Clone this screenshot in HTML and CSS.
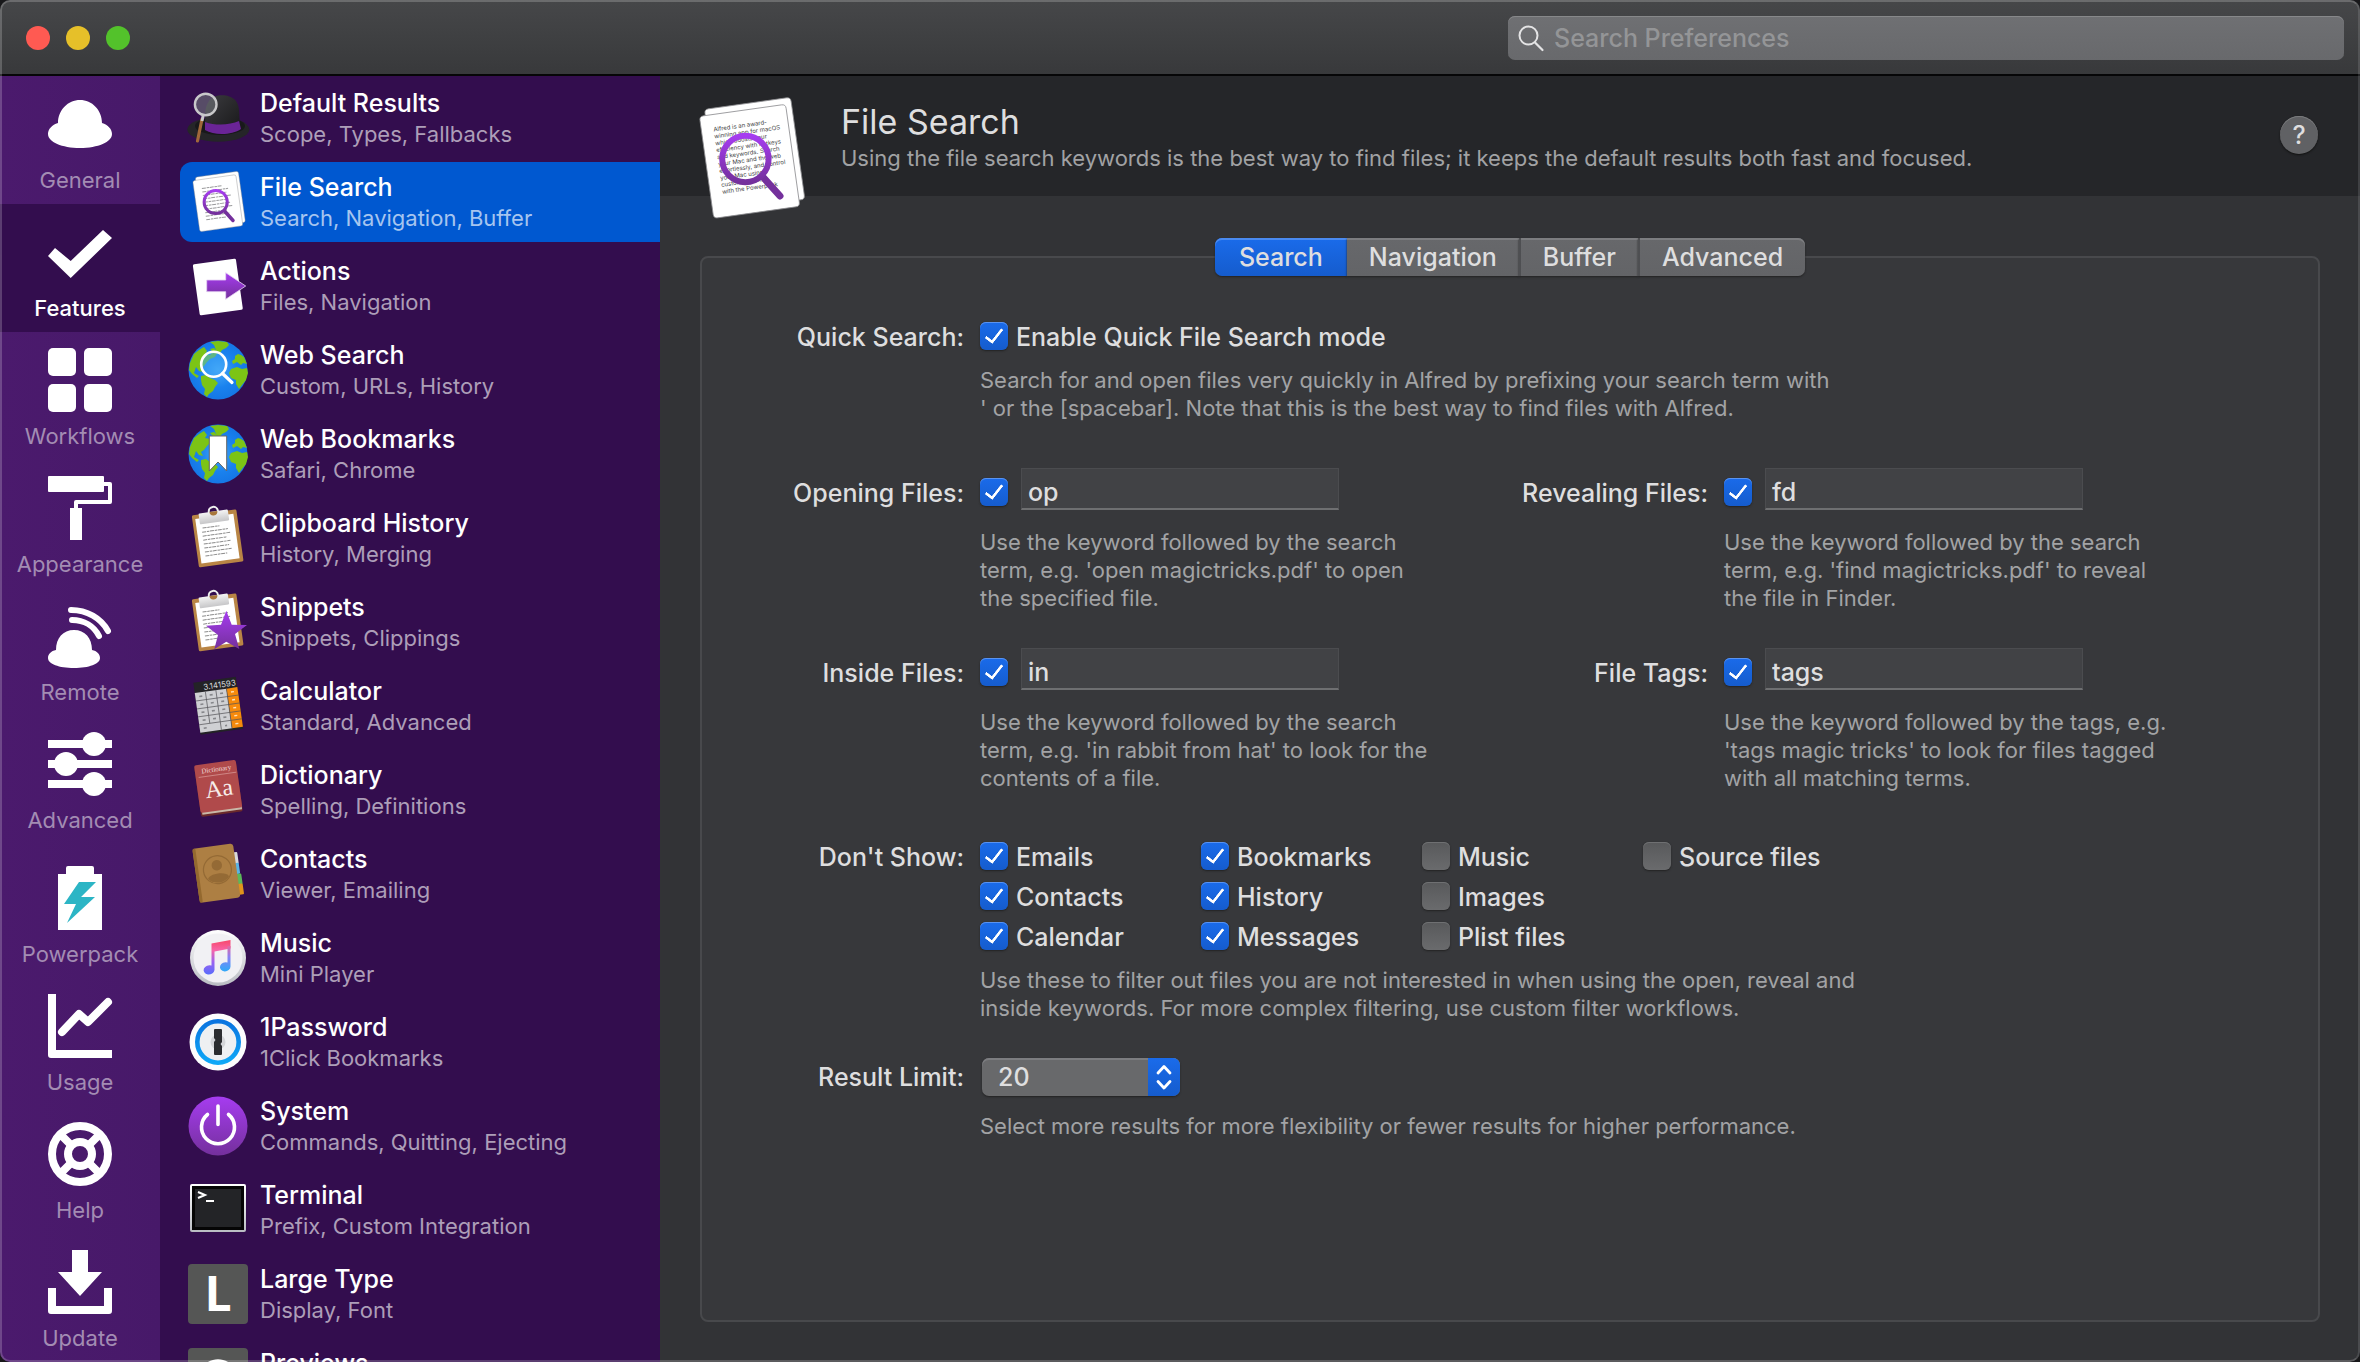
FILE: index.html
```html
<!DOCTYPE html>
<html lang="en">
<head>
<meta charset="utf-8">
<meta name="viewport" content="width=device-width, initial-scale=1">
<title>Alfred Preferences</title>
<link rel="stylesheet" href="styles.css">
</head>
<body>
<svg class="defs" aria-hidden="true">
  <defs>
    <linearGradient id="violet" x1="0" y1="0" x2="0" y2="1"><stop offset="0" stop-color="#a63cf0"/><stop offset="1" stop-color="#74309c"/></linearGradient>
    <linearGradient id="dome" x1="0" y1="0" x2="1" y2="1"><stop offset="0" stop-color="#3c3c3f"/><stop offset="1" stop-color="#161618"/></linearGradient>
    <linearGradient id="silver" x1="0" y1="0" x2="0" y2="1"><stop offset="0" stop-color="#fff"/><stop offset="1" stop-color="#b9bcc2"/></linearGradient>
    <linearGradient id="clip" x1="0" y1="0" x2="0" y2="1"><stop offset="0" stop-color="#f4f4f4"/><stop offset="1" stop-color="#c6c6c8"/></linearGradient>
    <linearGradient id="note" gradientUnits="userSpaceOnUse" x1="0" y1="12" x2="0" y2="46"><stop offset="0" stop-color="#f8486a"/><stop offset=".3" stop-color="#f765a8"/><stop offset=".65" stop-color="#9a62f0"/><stop offset="1" stop-color="#5b6cfb"/></linearGradient>
    <linearGradient id="note2" gradientUnits="userSpaceOnUse" x1="0" y1="16" x2="0" y2="42"><stop offset="0" stop-color="#f5648f"/><stop offset=".5" stop-color="#8a80f5"/><stop offset="1" stop-color="#35a6f8"/></linearGradient>
    <linearGradient id="onering" x1="0" y1="0" x2="0" y2="1"><stop offset="0" stop-color="#0a74e0"/><stop offset="1" stop-color="#0fa8f7"/></linearGradient>
    <radialGradient id="sea"><stop offset="0" stop-color="#45a9f8"/><stop offset=".6" stop-color="#1a82ee"/><stop offset="1" stop-color="#1577e6"/></radialGradient>
    <symbol id="globe" viewBox="0 0 60 60">
      <circle cx="30" cy="30" r="29.500" fill="url(#sea)"/>
      <g fill="#7cc415">
        <path d="M1 30 2 23 6 14 11 10 16 7 19 11 17 14 22 15 25 12 22 9 26 8 30 12 27 17 22 19 19 22 16 26 13 28 15 32 11 31 8 27 6 33 11 36 9 38 4 34Z"/>
        <path d="M22 2 30 1 39 2 41 5 38 8 34 10 31 14 28 10 26 5Z"/>
        <path d="M13 36 18 35 22 38 27 40 30 43 27 47 25 51 21 54 19 57 16 54 17 49 14 45 13 40Z"/>
        <path d="M41 33 43 29 49 27 54 29 59 28 60 33 58 40 54 45 51 49 48 44 48 40 43 38Z"/>
        <path d="M44 21 47 19 47 16 50 14 53 15 56 17 59 24 55 23 53 25 49 22 45 24Z"/>
      </g>
    </symbol>
    <symbol id="clipboard" viewBox="0 0 60 60" overflow="visible">
      <g transform="translate(3.700 7.500) rotate(-8)">
        <rect width="45" height="52.500" rx="1.500" fill="#b98545"/>
        <rect x="3" y="4" width="38.500" height="45" fill="#fff"/>
        <path d="M9 14h17M8 18h26M8 22h28M8 26h24M8 30h27M8 34h25M8 38h27M8 42h22" stroke="#8c8c8c" stroke-width="1" stroke-dasharray="4 .8 2.500 .6"/>
        <circle cx="22" cy="-1" r="4.600" fill="none" stroke="#eee" stroke-width="2"/>
        <rect x="7" y="-1" width="29.500" height="11" rx="1" fill="url(#clip)"/>
        <path d="M18 -1a4 4 0 0 0 8 0z" fill="#a8773c"/>
      </g>
    </symbol>
    <symbol id="pages" viewBox="0 0 60 60" overflow="visible">
      <g stroke="#8d8d90" stroke-width=".4" fill="#fff">
        <rect width="43.500" height="51.500" rx="2" transform="translate(7.200 5.200) rotate(-8)"/>
        <rect width="43.500" height="51.500" rx="2" transform="translate(4.700 8.700) rotate(-8)"/>
      </g>
    </symbol>
    <symbol id="lens" viewBox="0 0 60 60">
      <path d="M36.500 39 45 48.500" stroke="#74309c" stroke-width="3.500" stroke-linecap="round"/>
      <circle cx="27.700" cy="30" r="11.600" fill="none" stroke="url(#violet)" stroke-width="3"/>
    </symbol>
  </defs>
</svg>

<div class="window">
  <header class="titlebar">
    <div class="lights">
      <button class="light light--close" aria-label="Close"></button>
      <button class="light light--min" aria-label="Minimise"></button>
      <button class="light light--zoom" aria-label="Zoom"></button>
    </div>
    <label class="search">
      <svg class="search__icon" viewBox="0 0 26 26" aria-hidden="true"><circle cx="10.500" cy="10.500" r="9" fill="none" stroke="#e4e4e5" stroke-width="2"/><path d="M17 17.500 24.500 25" stroke="#e4e4e5" stroke-width="2.200" stroke-linecap="round"/></svg>
      <input class="search__input" type="search" placeholder="Search Preferences" aria-label="Search Preferences">
    </label>
  </header>

  <div class="body">
    <nav class="rail" aria-label="Sections">
      <a class="rail__item" href="#general"><svg viewBox="0 0 64 64" aria-hidden="true"><path fill="#fff" d="M10 31C10 18 20 8 32 8S54 18 54 31C60 33 64 37 64 42 64 50 50 56 32 56S0 50 0 42C0 37 4 33 10 31Z"/></svg>General</a>
      <a class="rail__item rail__item--on" href="#features" aria-current="page"><svg viewBox="0 0 64 64" aria-hidden="true"><path fill="#fff" d="M7 28 22.700 41 55 10 64 18 22.700 58 0 36Z"/></svg>Features</a>
      <a class="rail__item" href="#workflows"><svg viewBox="0 0 64 64" aria-hidden="true"><g fill="#fff"><rect width="28" height="28" rx="5"/><rect x="36" width="28" height="28" rx="5"/><rect y="36" width="28" height="28" rx="5"/><rect x="36" y="36" width="28" height="28" rx="5"/></g></svg>Workflows</a>
      <a class="rail__item" href="#appearance"><svg viewBox="0 0 64 64" aria-hidden="true"><rect width="56" height="16" rx="1" fill="#fff"/><path d="M56 8H62V26H28V33" fill="none" stroke="#fff" stroke-width="4" stroke-linejoin="round"/><rect x="22" y="32" width="12" height="32" fill="#fff"/></svg>Appearance</a>
      <a class="rail__item" href="#remote"><svg viewBox="0 0 64 64" aria-hidden="true"><path fill="#fff" d="M8 46C8 34 15 26 26 26S44 34 44 46C49 47 52 50 52 54 52 60 41 64 26 64S0 60 0 54C0 50 3 47 8 46Z"/><g fill="none" stroke="#fff" stroke-width="6" stroke-linecap="round"><path d="M23 6C39 6 53 14 60 27"/><path d="M24 16C36 16 46 22 51 32"/></g></svg>Remote</a>
      <a class="rail__item" href="#advanced"><svg viewBox="0 0 64 64" aria-hidden="true"><path d="M0 12H64M0 32H64M0 52H64" stroke="#fff" stroke-width="8"/><g fill="#fff"><circle cx="46" cy="12" r="12"/><circle cx="18" cy="32" r="12"/><circle cx="46" cy="52" r="12"/></g></svg>Advanced</a>
      <a class="rail__item rail__item--apart" href="#powerpack"><svg viewBox="0 0 64 64" aria-hidden="true"><path fill="#fff" d="M18 2a2 2 0 0 1 2-2H44a2 2 0 0 1 2 2V8H54V64H10V8H18Z"/><path fill="#2cb5c5" d="M31 16H48L33 31H47L19 57 28 38H16Z"/></svg>Powerpack</a>
      <a class="rail__item" href="#usage"><svg viewBox="0 0 64 64" aria-hidden="true"><path fill="#fff" d="M0 0H8V56H64V64H3A3 3 0 0 1 0 61Z"/><path d="M14 38 31 20 40 28 60 8" fill="none" stroke="#fff" stroke-width="8" stroke-linecap="round" stroke-linejoin="round"/></svg>Usage</a>
      <a class="rail__item" href="#help"><svg viewBox="0 0 64 64" aria-hidden="true"><g fill="none" stroke="#fff" stroke-width="8"><circle cx="32" cy="32" r="28"/><circle cx="32" cy="32" r="12"/><path d="M12 12 24 24M52 12 40 24M12 52 24 40M52 52 40 40"/></g></svg>Help</a>
      <a class="rail__item" href="#update"><svg viewBox="0 0 64 64" aria-hidden="true"><path fill="#fff" d="M24 0H40V22H54L32 46 10 22H24ZM0 38H8V56H56V38H64V61A3 3 0 0 1 61 64H3A3 3 0 0 1 0 61Z"/></svg>Update</a>
    </nav>

    <nav class="list" aria-label="Features">
      <a class="item" href="#default-results">
        <svg class="item__icon" viewBox="0 0 60 60" aria-hidden="true">
          <ellipse cx="30.300" cy="41.500" rx="31" ry="12.300" fill="#252528"/>
          <ellipse cx="32" cy="38" rx="25" ry="9" fill="#18181a"/>
          <path d="M17 41C18 30 15 22 21 13 27 5 42 6 48 13 53 20 50 28 53 41 45 47 27 48 17 41Z" fill="url(#dome)"/>
          <path d="M17 34C28 38 42 37 51 33L53 41C44 47 27 48 17 42Z" fill="#6a2496"/>
          <path d="M14 31 9.500 53" stroke="#a0683a" stroke-width="3.200" stroke-linecap="round"/>
          <path d="M15.500 26 14 33" stroke="#c9c9cc" stroke-width="3"/>
          <circle cx="17.700" cy="16.500" r="10.800" fill="#6c6f74" fill-opacity=".65" stroke="#c8c8ca" stroke-width="2.400"/>
        </svg>
        <span class="item__text"><span class="item__name">Default Results</span><span class="item__sub">Scope, Types, Fallbacks</span></span>
      </a>
      <a class="item item--on" href="#file-search" aria-current="page">
        <svg class="item__icon" viewBox="0 0 60 60" aria-hidden="true">
          <use href="#pages"/>
          <path transform="translate(4.700 8.700) rotate(-8)" d="M8 9h20M8 12.500h26M8 16h24M8 19.500h28M8 23h24M8 26.500h26M8 30h28M8 33.500h22M8 37h24M8 40.500h20" stroke="#9a9a9c" stroke-width="1" stroke-dasharray="4 .8 2.500 .6"/>
          <use href="#lens"/>
        </svg>
        <span class="item__text"><span class="item__name">File Search</span><span class="item__sub">Search, Navigation, Buffer</span></span>
      </a>
      <a class="item" href="#actions">
        <svg class="item__icon" viewBox="0 0 60 60" aria-hidden="true"><rect width="43.500" height="51.500" rx="1.500" transform="translate(4.700 8.500) rotate(-8)" fill="#fff"/><path d="M18.700 24H37.700V16.700L57.700 30 37.700 43.300V35.700H18.700Z" fill="url(#violet)" stroke="#e6d3f3" stroke-width=".8"/></svg>
        <span class="item__text"><span class="item__name">Actions</span><span class="item__sub">Files, Navigation</span></span>
      </a>
      <a class="item" href="#web-search">
        <svg class="item__icon" viewBox="0 0 60 60" aria-hidden="true"><use href="#globe"/><circle cx="25.700" cy="24.300" r="12.500" fill="#3fa6f8" fill-opacity=".5"/><circle cx="25.700" cy="24.300" r="12.500" fill="none" stroke="#fff" stroke-width="2.600"/><path d="M34.500 33.500 44 42.500" stroke="#fff" stroke-width="3.200" stroke-linecap="round"/></svg>
        <span class="item__text"><span class="item__name">Web Search</span><span class="item__sub">Custom, URLs, History</span></span>
      </a>
      <a class="item" href="#web-bookmarks">
        <svg class="item__icon" viewBox="0 0 60 60" aria-hidden="true"><use href="#globe"/><path d="M21.300 12H38.700V47L30 38 21.300 47Z" fill="#fff" stroke="#666" stroke-width="1"/></svg>
        <span class="item__text"><span class="item__name">Web Bookmarks</span><span class="item__sub">Safari, Chrome</span></span>
      </a>
      <a class="item" href="#clipboard-history">
        <svg class="item__icon" viewBox="0 0 60 60" aria-hidden="true"><use href="#clipboard"/></svg>
        <span class="item__text"><span class="item__name">Clipboard History</span><span class="item__sub">History, Merging</span></span>
      </a>
      <a class="item" href="#snippets">
        <svg class="item__icon" viewBox="0 0 60 60" aria-hidden="true"><use href="#clipboard"/><path d="M38.300 18.700 43.700 32.700 59 33 47 42 51.300 57 38.300 49.700 26.300 57.300 30 43 18 33.700 33 32.700Z" fill="url(#violet)"/></svg>
        <span class="item__text"><span class="item__name">Snippets</span><span class="item__sub">Snippets, Clippings</span></span>
      </a>
      <a class="item" href="#calculator">
        <svg class="item__icon" viewBox="0 0 60 60" aria-hidden="true">
          <g transform="translate(5.300 6.700) rotate(-8)">
            <rect width="43" height="52.500" fill="#232326"/>
            <rect y="10.500" width="32" height="40" fill="#cfd0d3"/>
            <rect x="32" y="10.500" width="11" height="40" fill="#f68a0c"/>
            <path d="M0 18.500H43M0 26.500H43M0 34.500H43M0 42.500H43M10.700 10.500V42.500M21.300 10.500V50.500M32 10.500V50.500" stroke="#55565a" stroke-width=".7"/>
            <path d="M4 14.500h3M14.500 14.500h3M25 14.500h3M4 22.500h3M14.500 22.500h3M25 22.500h3M4 30.500h3M14.500 30.500h3M25 30.500h3M4 38.500h3M14.500 38.500h3M25 38.500h3M4 46.500h3M25.500 47h2" stroke="#85868a" stroke-width="1.600"/>
            <path d="M36 14.500h3M36 22.500h3M36 30.500h3M36 38.500h3M36 46.500h3" stroke="#ffe2b8" stroke-width="1.400"/>
            <text x="42" y="8.600" text-anchor="end" font-family="Inter, sans-serif" font-size="8" font-weight="400" fill="#d8dadc">3.141593</text>
          </g>
        </svg>
        <span class="item__text"><span class="item__name">Calculator</span><span class="item__sub">Standard, Advanced</span></span>
      </a>
      <a class="item" href="#dictionary">
        <svg class="item__icon" viewBox="0 0 60 60" aria-hidden="true">
          <g transform="translate(6 5.500) rotate(-8)" font-weight="400">
            <rect y="2" width="42" height="50" rx="2" fill="#6b2a2b"/>
            <rect x="1.500" y="46" width="40" height="4" fill="#c9b8a8"/>
            <rect width="42" height="48" rx="2" fill="#b04a4b"/>
            <path d="M3 12.500H41" stroke="#d99a98" stroke-width=".7"/>
            <text x="21.500" y="9" text-anchor="middle" font-family="Liberation Serif, serif" font-size="7" fill="#f2dcda">Dictionary</text>
            <text x="21.500" y="34" text-anchor="middle" font-family="Liberation Serif, serif" font-size="24" fill="#f7ecea">Aa</text>
          </g>
        </svg>
        <span class="item__text"><span class="item__name">Dictionary</span><span class="item__sub">Spelling, Definitions</span></span>
      </a>
      <a class="item" href="#contacts">
        <svg class="item__icon" viewBox="0 0 60 60" aria-hidden="true">
          <g transform="translate(4.300 5) rotate(-8)">
            <rect x="38" y="9" width="6" height="12" rx="1" fill="#d9d9dc"/><rect x="38" y="20" width="6" height="11" rx="1" fill="#5bb4e4"/><rect x="38" y="31" width="7" height="11" rx="1" fill="#5cb85a"/><rect x="38" y="41" width="7" height="11" rx="1" fill="#e0931c"/>
            <rect width="41" height="54.500" rx="3" fill="#ad7f43"/>
            <rect width="3" height="54.500" rx="1.500" fill="#94692f"/>
            <g fill="#946a35"><circle cx="22" cy="19.500" r="5.200"/><path d="M11.500 32C13 26.500 31 26.500 32.500 32 28 38.500 16 38.500 11.500 32Z"/></g>
            <circle cx="22" cy="24" r="14" fill="none" stroke="#946a35" stroke-width="1.200"/>
          </g>
        </svg>
        <span class="item__text"><span class="item__name">Contacts</span><span class="item__sub">Viewer, Emailing</span></span>
      </a>
      <a class="item" href="#music">
        <svg class="item__icon" viewBox="0 0 60 60" aria-hidden="true"><circle cx="30" cy="30" r="28" fill="url(#silver)"/><circle cx="30" cy="30" r="24.500" fill="#f1f1f4"/>
          <path d="M23.500 15.500 42.500 12V20.500L26.500 23.500V42A5.500 4.600 -12 1 1 23.500 37.500Z" fill="url(#note)"/>
          <path d="M39.500 18H42.500V38.500A5.300 4.600 -12 1 1 39.500 34.500Z" fill="url(#note2)"/>
        </svg>
        <span class="item__text"><span class="item__name">Music</span><span class="item__sub">Mini Player</span></span>
      </a>
      <a class="item" href="#onepassword">
        <svg class="item__icon" viewBox="0 0 60 60" aria-hidden="true"><circle cx="30" cy="30" r="28.500" fill="#fdfdfd"/><circle cx="30" cy="30" r="20.700" fill="#eef0f2" stroke="url(#onering)" stroke-width="4.600"/><circle cx="30" cy="30" r="7.500" fill="#d4d6d9"/><path d="M27 17H33A1 1 0 0 1 34 18V30L32.500 32 34 34V42A1 1 0 0 1 33 43H27A1 1 0 0 1 26 42V30L27.500 28 26 26V18A1 1 0 0 1 27 17Z" fill="#2b2d30"/></svg>
        <span class="item__text"><span class="item__name">1Password</span><span class="item__sub">1Click Bookmarks</span></span>
      </a>
      <a class="item" href="#system">
        <svg class="item__icon" viewBox="0 0 60 60" aria-hidden="true"><circle cx="30" cy="30" r="29.500" fill="url(#violet)"/><path d="M30 10V28.500M19.500 18.500A16.500 16.500 0 1 0 40.500 18.500" fill="none" stroke="#fff" stroke-width="3.600" stroke-linecap="round"/></svg>
        <span class="item__text"><span class="item__name">System</span><span class="item__sub">Commands, Quitting, Ejecting</span></span>
      </a>
      <a class="item" href="#terminal">
        <svg class="item__icon" viewBox="0 0 60 60" aria-hidden="true"><rect x="2" y="4" width="56" height="48" rx="2" fill="url(#silver)"/><rect x="4" y="6" width="52" height="44" fill="#050505"/><rect x="7" y="9" width="46" height="38" fill="#232427"/><path d="M10 12 17 15 10 18M18 21H26" fill="none" stroke="#fff" stroke-width="2"/></svg>
        <span class="item__text"><span class="item__name">Terminal</span><span class="item__sub">Prefix, Custom Integration</span></span>
      </a>
      <a class="item" href="#large-type">
        <svg class="item__icon" viewBox="0 0 60 60" aria-hidden="true"><rect width="60" height="60" rx="4" fill="#555655"/><text x="30" y="47" text-anchor="middle" font-family="Open Sans, sans-serif" font-weight="700" font-size="48" fill="#fff">L</text></svg>
        <span class="item__text"><span class="item__name">Large Type</span><span class="item__sub">Display, Font</span></span>
      </a>
      <a class="item" href="#previews">
        <svg class="item__icon" viewBox="0 0 60 60" aria-hidden="true"><rect width="60" height="60" rx="4" fill="#555655"/><path d="M8 30C16 5 44 5 52 30 44 52 16 52 8 30Z" fill="#fff"/><circle cx="30" cy="30" r="10" fill="#555655"/></svg>
        <span class="item__text"><span class="item__name">Previews</span><span class="item__sub">Quick Look</span></span>
      </a>
    </nav>

    <main class="main">
      <header class="head">
        <svg class="head__icon" viewBox="0 0 60 60" aria-hidden="true">
          <use href="#pages"/>
          <g transform="translate(4.700 8.700) rotate(-8)" font-family="Inter, sans-serif" font-size="3" font-weight="400" fill="#3c3c3e">
            <text x="6" y="8.500">Alfred is an award-</text><text x="6" y="12">winning app for macOS</text><text x="6" y="15.500">which boosts your</text><text x="6" y="19">efficiency with hotkeys</text><text x="6" y="22.500">and keywords. Search</text><text x="6" y="26">your Mac and the web</text><text x="6" y="29.500">effortlessly, and control</text><text x="6" y="33">your Mac using</text><text x="6" y="36.500">custom actions</text><text x="6" y="40">with the Powerpack</text>
          </g>
          <use href="#lens"/>
        </svg>
        <div class="head__text">
          <h1 class="head__title">File Search</h1>
          <p class="head__sub">Using the file search keywords is the best way to find files; it keeps the default results both fast and focused.</p>
        </div>
        <button class="help" aria-label="Help">?</button>
      </header>

      <section class="panel">
        <div class="tabs" role="tablist">
          <button class="tab tab--on" role="tab" aria-selected="true">Search</button>
          <button class="tab" role="tab" aria-selected="false">Navigation</button>
          <button class="tab" role="tab" aria-selected="false">Buffer</button>
          <button class="tab" role="tab" aria-selected="false">Advanced</button>
        </div>

        <form class="form">
          <div class="row">
            <span class="row__label">Quick Search:</span>
            <div class="row__main">
              <label class="check"><input class="box" type="checkbox" checked>Enable Quick File Search mode</label>
              <p class="hint">Search for and open files very quickly in Alfred by prefixing your search term with<br>' or the [spacebar]. Note that this is the best way to find files with Alfred.</p>
            </div>
          </div>

          <div class="pair pair--first">
            <div class="row row--entry">
              <label class="row__label" for="open">Opening Files:</label>
              <div class="row__main">
                <div class="entry"><input class="box" type="checkbox" checked aria-label="Opening files"><input class="text" id="open" type="text" value="op"></div>
                <p class="hint hint--narrow">Use the keyword followed by the search term, e.g. 'open magictricks.pdf' to open the specified file.</p>
              </div>
            </div>
            <div class="row row--entry">
              <label class="row__label" for="reveal">Revealing Files:</label>
              <div class="row__main">
                <div class="entry"><input class="box" type="checkbox" checked aria-label="Revealing files"><input class="text" id="reveal" type="text" value="fd"></div>
                <p class="hint hint--narrow">Use the keyword followed by the search term, e.g. 'find magictricks.pdf' to reveal the file in Finder.</p>
              </div>
            </div>
          </div>

          <div class="pair">
            <div class="row row--entry">
              <label class="row__label" for="inside">Inside Files:</label>
              <div class="row__main">
                <div class="entry"><input class="box" type="checkbox" checked aria-label="Inside files"><input class="text" id="inside" type="text" value="in"></div>
                <p class="hint hint--narrow">Use the keyword followed by the search term, e.g. 'in rabbit from hat' to look for the contents of a file.</p>
              </div>
            </div>
            <div class="row row--entry">
              <label class="row__label" for="tags">File Tags:</label>
              <div class="row__main">
                <div class="entry"><input class="box" type="checkbox" checked aria-label="File tags"><input class="text" id="tags" type="text" value="tags"></div>
                <p class="hint hint--narrow">Use the keyword followed by the tags, e.g. 'tags magic tricks' to look for files tagged with all matching terms.</p>
              </div>
            </div>
          </div>

          <div class="row row--types">
            <span class="row__label">Don't Show:</span>
            <div class="row__main">
              <div class="types">
                <label class="check"><input class="box" type="checkbox" checked>Emails</label>
                <label class="check"><input class="box" type="checkbox" checked>Contacts</label>
                <label class="check"><input class="box" type="checkbox" checked>Calendar</label>
                <label class="check"><input class="box" type="checkbox" checked>Bookmarks</label>
                <label class="check"><input class="box" type="checkbox" checked>History</label>
                <label class="check"><input class="box" type="checkbox" checked>Messages</label>
                <label class="check"><input class="box" type="checkbox">Music</label>
                <label class="check"><input class="box" type="checkbox">Images</label>
                <label class="check"><input class="box" type="checkbox">Plist files</label>
                <label class="check"><input class="box" type="checkbox">Source files</label>
              </div>
              <p class="hint">Use these to filter out files you are not interested in when using the open, reveal and<br>inside keywords. For more complex filtering, use custom filter workflows.</p>
            </div>
          </div>

          <div class="row row--limit">
            <label class="row__label" for="limit">Result Limit:</label>
            <div class="row__main">
              <div class="popup">
                <select class="popup__select" id="limit"><option>10</option><option selected>20</option><option>30</option><option>40</option></select>
                <svg class="popup__arrows" viewBox="0 0 32 38" aria-hidden="true"><path d="M10 15 16 8.500 22 15M10 23.500 16 30 22 23.500" fill="none" stroke="#fff" stroke-width="2.800" stroke-linecap="round" stroke-linejoin="round"/></svg>
              </div>
              <p class="hint">Select more results for more flexibility or fewer results for higher performance.</p>
            </div>
          </div>
        </form>
      </section>
    </main>
  </div>
</div>
</body>
</html>
```
FILE: styles.css
```css
*, *::before, *::after { box-sizing: border-box; }

body {
  margin: 0;
  background: #18181a;
  font-family: Inter, "Liberation Sans", sans-serif;
  font-size: 25px;
  font-weight: 500;
  line-height: 30px;
  color: #dededf;
}

button, input, select { font: inherit; color: inherit; margin: 0; }
h1, p { margin: 0; font-weight: 400; }
a { color: inherit; text-decoration: none; }
svg { display: block; overflow: visible; }
.defs { position: absolute; width: 0; height: 0; }

.window {
  position: relative;
  display: flex;
  flex-direction: column;
  height: 100vh;
  overflow: hidden;
  border-radius: 10px;
  background: #323336;
}
.window::after {
  content: "";
  position: absolute;
  inset: 0;
  border: 2px solid rgba(255, 255, 255, .2);
  border-right-color: rgba(255, 255, 255, .12);
  border-radius: 10px;
  pointer-events: none;
}

/* Title bar */
.titlebar {
  flex: none;
  display: flex;
  justify-content: space-between;
  align-items: center;
  height: 76px;
  padding: 2px 16px 0 26px;
  background: linear-gradient(#464749, #38393b);
  border-bottom: 2px solid #060607;
}
.lights { display: flex; gap: 16px; }
.light { width: 24px; height: 24px; padding: 0; border: 0; border-radius: 50%; }
.light--close { background: #ff5a52; }
.light--min { background: #e6c029; }
.light--zoom { background: #53c22b; }
.search {
  display: flex;
  align-items: center;
  gap: 10px;
  width: 836px;
  height: 44px;
  padding: 0 10px;
  border-radius: 7px;
  background: linear-gradient(#6f7073, #68696c);
  box-shadow: inset 0 1px 0 #87888a;
}
.search__icon { width: 26px; height: 26px; }
.search__input {
  flex: 1;
  min-width: 0;
  padding: 0;
  border: 0;
  outline: 0;
  appearance: none;
  background: none;
}
.search__input::placeholder { color: #949597; opacity: 1; }

.body { flex: 1; display: flex; min-height: 0; }

/* Section rail */
.rail {
  flex: none;
  width: 160px;
  overflow: hidden;
  background: linear-gradient(90deg, #4b1a6d, #471969);
}
.rail__item {
  display: flex;
  flex-direction: column;
  align-items: center;
  gap: 10px;
  height: 128px;
  padding-top: 16px;
  font-size: 22px;
  font-weight: 400;
  line-height: 28px;
  color: #a38cb3;
}
.rail__item svg { width: 64px; height: 64px; }
.rail__item--on { background: #330d4e; color: #fff; font-weight: 500; }
.rail__item--apart { margin-top: 6px; }

/* Feature list */
.list {
  flex: none;
  display: flex;
  flex-direction: column;
  gap: 4px;
  width: 500px;
  padding: 2px 0 0 20px;
  overflow: hidden;
  background: #330d4e;
}
.item {
  flex: none;
  display: flex;
  align-items: center;
  gap: 12px;
  height: 80px;
  padding-left: 8px;
  border-radius: 12px 0 0 12px;
}
.item--on { background: #0058d0; }
.item__icon { flex: none; width: 60px; height: 60px; }
.item__text { display: flex; flex-direction: column; gap: 2px; white-space: nowrap; }
.item__name { color: #fff; }
.item__sub { font-size: 22px; font-weight: 400; line-height: 28px; color: #ad9eb8; }
.item--on .item__sub { color: #a6c5ef; }

/* Content */
.main { flex: 1; display: flex; flex-direction: column; min-width: 0; }
.head {
  display: flex;
  align-items: flex-start;
  height: 120px;
  padding: 23px 42px 0 30px;
  background: #252629;
}
.head__icon { flex: none; width: 120px; height: 120px; }
.head__text { flex: 1; padding: 3px 0 0 31px; }
.head__title { font-size: 34px; line-height: 40px; }
.head__sub { padding-top: 2px; font-size: 22px; line-height: 28px; color: #a1a2a4; }
.help {
  width: 38px;
  height: 38px;
  margin-top: 17px;
  padding: 0;
  border: 0;
  border-radius: 50%;
  background: #606164;
  box-shadow: inset 0 1px 0 #7b7c7e, 0 1px 2px #111;
  line-height: 38px;
}

.panel {
  flex: 1;
  margin: 60px 40px 40px;
  border: 2px solid #48494c;
  border-radius: 8px;
  background: #37383b;
}
.tabs { display: flex; justify-content: center; margin-top: -20px; }
.tab {
  height: 38px;
  padding: 0 22px;
  border: 0;
  border-left: 2px solid #4e4f52;
  background: linear-gradient(#67686b, #636467);
  box-shadow: inset 0 2px 0 #7c7d80, 0 1px 2px #222;
  line-height: 38px;
}
.tab:first-child { border-radius: 7px 0 0 7px; padding: 0 24px; }
.tab:last-child { border-radius: 0 7px 7px 0; }
.tab--on, .tab--on + .tab { border-left: 0; }
.tab--on {
  background: linear-gradient(#1a6bea, #155ccd);
  box-shadow: inset 0 2px 0 #4a8af0, 0 1px 2px #222;
}

.form { padding: 46px 128px 0 0; }
.pair { display: grid; grid-template-columns: 1fr 1fr; margin-top: 36px; }
.pair--first { margin-top: 46px; }
.row { display: grid; grid-template-columns: 262px minmax(0, 1fr); gap: 16px; }
.row--types { margin-top: 50px; }
.row--limit { margin-top: 36px; }
.row__label { text-align: right; }
.row--entry .row__label { padding-top: 10px; }
.row--limit .row__label { padding-top: 4px; }

.check { display: flex; align-items: flex-start; gap: 8px; }
.box {
  flex: none;
  position: relative;
  width: 28px;
  height: 28px;
  appearance: none;
  border-radius: 6px;
  background: linear-gradient(#58595b, #6a6b6d);
  box-shadow: inset 0 1px 0 #6f7072, 0 1px 2px #222;
}
.box:checked {
  background: linear-gradient(#1a6bea, #155ccd);
  box-shadow: inset 0 1px 0 #5a93f0, 0 1px 2px #222;
}
.box:checked::before {
  content: "";
  position: absolute;
  left: 9px;
  top: 3px;
  width: 10px;
  height: 18px;
  border: solid #fff;
  border-width: 0 3px 3px 0;
  border-radius: 1px;
  transform: rotate(38deg);
}
.entry { display: flex; gap: 13px; }
.entry .box { margin-top: 10px; }
.text {
  width: 318px;
  height: 42px;
  padding: 6px 6px 0;
  border: 1px solid #4b4c4f;
  border-bottom: 2px solid #6e6f71;
  border-radius: 0;
  outline: 0;
  background: #414245;
}
.hint { margin-top: 14px; font-size: 22px; line-height: 28px; color: #a2a3a5; }
.row--entry .hint { margin-top: 18px; }
.row--limit .hint { margin-top: 16px; }
.hint--narrow { max-width: 454px; }

.types {
  display: grid;
  grid-template-rows: repeat(3, 30px);
  grid-auto-flow: column;
  grid-auto-columns: 221px;
  row-gap: 10px;
}

.popup { position: relative; width: 198px; margin-left: 2px; }
.popup__select {
  display: block;
  width: 100%;
  height: 38px;
  padding: 0 40px 0 16px;
  border: 0;
  border-radius: 7px;
  appearance: none;
  background: #68696b;
  box-shadow: inset 0 2px 0 #7c7d80, 0 1px 2px #222;
}
.popup__arrows {
  position: absolute;
  top: 0;
  right: 0;
  width: 32px;
  height: 38px;
  border-radius: 0 7px 7px 0;
  background: linear-gradient(#1a6bea, #155ccd);
  pointer-events: none;
}
```
